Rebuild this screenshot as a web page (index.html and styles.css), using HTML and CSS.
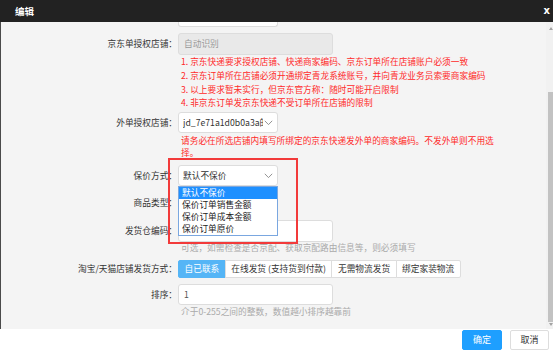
FILE: index.html
```html
<!DOCTYPE html>
<html lang="zh-CN">
<head>
<meta charset="utf-8">
<title>编辑</title>
<link rel="stylesheet" href="styles.css">
</head>
<body>
<div class="dialog">
  <div class="titlebar">
    <span class="title">编辑</span>
    <span class="close">x</span>
  </div>
  <div class="content">
    <div class="form">
      <div class="row row-stub">
        <div class="label"></div>
        <div class="field"><div class="stub"></div></div>
      </div>

      <div class="row row-1">
        <div class="label lh22">京东单授权店铺：</div>
        <div class="field">
          <div class="input disabled">自动识别</div>
          <div class="notes red">
            <div>1. 京东快递要求授权店铺、快递商家编码、京东订单所在店铺账户必须一致</div>
            <div>2. 京东订单所在店铺必须开通绑定青龙系统账号，并向青龙业务员索要商家编码</div>
            <div>3. 以上要求暂未实行，但京东官方称：随时可能开启限制</div>
            <div>4. 非京东订单发京东快递不受订单所在店铺的限制</div>
          </div>
        </div>
      </div>

      <div class="row row-2">
        <div class="label lh21">外单授权店铺：</div>
        <div class="field">
          <div class="select"><span class="sel-text">jd_7e71a1d0b0a3a的</span><svg class="chev" width="9" height="6" viewBox="0 0 9 6"><path d="M0.8 0.8 L4.5 4.6 L8.2 0.8" fill="none" stroke="#888" stroke-width="0.9"/></svg></div>
          <div class="notes2 red">请务必在所选店铺内填写所绑定的京东快递发外单的商家编码。不发外单则不用选择。</div>
        </div>
      </div>

      <div class="row row-3">
        <div class="label lh21">保价方式：</div>
        <div class="field">
          <div class="select-wrap">
            <div class="select"><span class="sel-text">默认不保价</span><svg class="chev" width="9" height="6" viewBox="0 0 9 6"><path d="M0.8 0.8 L4.5 4.6 L8.2 0.8" fill="none" stroke="#888" stroke-width="0.9"/></svg></div>
            <ul class="options">
              <li class="selected">默认不保价</li>
              <li>保价订单销售金额</li>
              <li>保价订单成本金额</li>
              <li>保价订单原价</li>
            </ul>
            <div class="highlight-box"></div>
          </div>
        </div>
      </div>

      <div class="row row-4">
        <div class="label lh21">商品类型：</div>
        <div class="field">
          <div class="select"></div>
        </div>
      </div>

      <div class="row row-5">
        <div class="label lh22">发货仓编码：</div>
        <div class="field">
          <div class="input"></div>
          <div class="hint">可选，如需检查是否京配、获取京配路由信息等，则必须填写</div>
        </div>
      </div>

      <div class="row row-6">
        <div class="label lh18">淘宝/天猫店铺发货方式：</div>
        <div class="field">
          <div class="btn-group">
            <span class="seg active">自已联系</span><span class="seg">在线发货 (支持货到付款)</span><span class="seg">无需物流发货</span><span class="seg">绑定家装物流</span>
          </div>
        </div>
      </div>

      <div class="row row-7">
        <div class="label lh21">排序：</div>
        <div class="field">
          <div class="input short">1</div>
          <div class="hint hint2">介于0-255之间的整数，数值越小排序越靠前</div>
        </div>
      </div>
    </div>
    <div class="scrollbar">
      <span class="arrow-up"></span>
      <span class="thumb"></span>
      <span class="arrow-down"></span>
    </div>
  </div>
  <div class="footer">
    <span class="btn primary">确定</span>
    <span class="btn">取消</span>
  </div>
</div>
</body>
</html>
```

FILE: styles.css
```css
* { box-sizing: border-box; }
html, body { margin: 0; padding: 0; }
body {
  width: 553px;
  height: 354px;
  overflow: hidden;
  font-family: "Noto Sans CJK SC", "Noto Sans", sans-serif;
  font-size: 8.7px;
  color: #333;
  background: #fff;
}
.dialog {
  display: flex;
  flex-direction: column;
  width: 553px;
  height: 354px;
}
.titlebar {
  height: 22px;
  flex: none;
  background: #222;
  color: #fff;
  display: flex;
  align-items: center;
  justify-content: space-between;
  padding: 0 3px 0 15px;
}
.title { font-size: 9.5px; font-weight: bold; line-height: 22px; }
.close { font-size: 10px; font-weight: bold; font-family: "DejaVu Sans", sans-serif; line-height: 20px; }

.content {
  flex: none;
  height: 307px;
  display: flex;
  background: #f4f4f4;
  border-left: 1px solid #4a4a4a;
}
.form {
  flex: 1;
  display: flex;
  flex-direction: column;
}
.row { display: flex; align-items: flex-start; }
.label {
  width: 177px;
  flex: none;
  text-align: right;
  color: #333;
  padding-right: 1px;
  white-space: nowrap;
}
.lh22 { line-height: 22px; }
.lh21 { line-height: 21px; }
.lh18 { line-height: 18px; }
.field { display: flex; flex-direction: column; }

.stub {
  width: 100px;
  height: 5px;
  background: #fff;
  border: 1px solid #ddd;
  border-top: none;
  border-radius: 0 0 3px 3px;
}
.row-stub { margin-bottom: 6px; }

.input {
  width: 155px;
  height: 22px;
  background: #fff;
  border: 1px solid #ddd;
  border-radius: 3px;
  padding-left: 5px;
  line-height: 20px;
  color: #555;
}
.input.short { height: 21px; line-height: 19px; }
.input.disabled { background: #e9e9e9; color: #999; }

.red { color: #ff2a2a; }
.notes { line-height: 13.75px; padding-left: 3px; }
.row-1 { margin-bottom: 2px; }

.select {
  width: 100px;
  height: 21px;
  background: #fff;
  border: 1px solid #ddd;
  border-radius: 3px;
  display: flex;
  align-items: center;
  padding: 0 4px 0 4px;
  position: relative;
  overflow: hidden;
}
.sel-text { flex: 1; white-space: nowrap; overflow: hidden; text-overflow: clip; color: #333; }
.chev { flex: none; margin-left: 1px; }

.notes2 {
  width: 318px;
  line-height: 11.5px;
  margin-top: 2px;
  padding-left: 3px;
}
.row-2 { margin-bottom: 7px; }

.select-wrap { position: relative; }
.options {
  position: absolute;
  left: 0;
  top: 21px;
  width: 100px;
  margin: 0;
  padding: 0;
  list-style: none;
  background: #fff;
  border: 1px solid #7aa7e0;
  z-index: 5;
}
.options li {
  height: 12px;
  line-height: 12px;
  padding-left: 3px;
  color: #222;
  white-space: nowrap;
}
.options li.selected { background: #1e90ff; color: #fff; }
.highlight-box {
  position: absolute;
  left: -10px;
  top: -7px;
  width: 130px;
  height: 86px;
  border: 2px solid #f23a3a;
  z-index: 6;
}
.row-3 { margin-bottom: 6px; position: relative; z-index: 3; }
.row-4 { margin-bottom: 7px; }

.hint { color: #aaa; line-height: 11px; padding-left: 3px; white-space: nowrap; }
.row-5 { margin-bottom: 7px; }

.btn-group { display: flex; height: 18px; }
.seg {
  height: 18px;
  line-height: 16px;
  padding: 0 5.5px;
  background: #fff;
  border: 1px solid #ddd;
  margin-left: -1px;
  color: #333;
  white-space: nowrap;
}
.seg:first-child { margin-left: 0; border-radius: 2px 0 0 2px; }
.seg:last-child { border-radius: 0 2px 2px 0; }
.seg.active { background: #55b5f6; border-color: #55b5f6; color: #fff; }
.row-6 { margin-bottom: 6px; }

.hint2 { line-height: 12px; margin-top: 1px; }

.scrollbar {
  width: 7px;
  flex: none;
  background: #f1f1f1;
  display: flex;
  flex-direction: column;
  align-items: flex-end;
  padding-top: 5px;
}
.arrow-up {
  width: 0; height: 0;
  border-left: 2.5px solid transparent;
  border-right: 2.5px solid transparent;
  border-bottom: 3px solid #a3a3a3;
}
.thumb {
  width: 5px;
  height: 230px;
  margin-top: 62px;
  background: #c2c2c2;
}
.arrow-down {
  width: 0; height: 0;
  border-left: 2.5px solid transparent;
  border-right: 2.5px solid transparent;
  border-top: 3px solid #a3a3a3;
  margin-top: 1px;
}

.footer {
  flex: 1;
  background: #fff;
  display: flex;
  justify-content: flex-end;
  align-items: flex-start;
  padding: 1px 4px 0 0;
  gap: 8px;
}
.btn {
  height: 20px;
  line-height: 18px;
  width: 39px;
  text-align: center;
  border: 1px solid #ddd;
  border-radius: 2px;
  background: #fff;
  color: #333;
  font-size: 9px;
}
.btn.primary { width: 40px; background: #1e9fff; border-color: #1e9fff; color: #fff; }
```
